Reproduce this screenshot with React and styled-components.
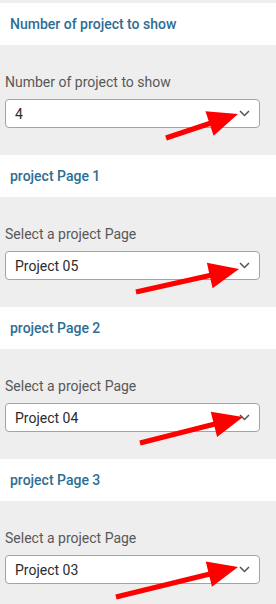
import React from "react";
import styled, { createGlobalStyle } from "styled-components";

const Global = createGlobalStyle`
  html, body {
    margin: 0;
    padding: 0;
    background: #eeeeee;
    font-family: Roboto, "Liberation Sans", sans-serif;
  }
`;

const Page = styled.div`
  width: 276px;
  padding-top: 3px;
  background: #eeeeee;
`;

const Section = styled.section`
  position: relative;
  display: flex;
  flex-direction: column;
`;

const Header = styled.div`
  height: 42px;
  display: flex;
  align-items: center;
  padding-left: 10px;
  background: #ffffff;
  color: #2c6e94;
  font-size: 14px;
  font-weight: 500;
`;

const Body = styled.div`
  display: flex;
  flex-direction: column;
  padding: 27px 16px 27px 5px;
`;

const Label = styled.div`
  line-height: 20px;
  margin-bottom: 7px;
  color: #585858;
  font-size: 14px;
`;

const SelectBox = styled.div`
  height: 29px;
  box-sizing: border-box;
  display: flex;
  align-items: center;
  justify-content: space-between;
  padding: 0 9px 0 9px;
  background: #ffffff;
  border: 1px solid #a3a3a3;
  border-radius: 4px;
  color: #2b2b2b;
  font-size: 14px;
`;

const Overlay = styled.svg`
  position: absolute;
  left: 0;
  top: 0;
  width: 276px;
  height: 152px;
  pointer-events: none;
`;

const Chevron = () => (
  <svg width="11" height="7" viewBox="0 0 11 7">
    <path d="M1 1l4.5 4.5L10 1" fill="none" stroke="#555" strokeWidth="1.5" />
  </svg>
);

const Arrow = ({ from, to }) => {
  const dx = to[0] - from[0];
  const dy = to[1] - from[1];
  const len = Math.hypot(dx, dy);
  const ux = dx / len;
  const uy = dy / len;
  const nx = -uy;
  const ny = ux;
  const w = 2.6;
  const hw = 13;
  const hl = 30;
  const neck = [to[0] - ux * hl, to[1] - uy * hl];
  const pts = [
    [from[0] + nx * w, from[1] + ny * w],
    [neck[0] + nx * w, neck[1] + ny * w],
    [neck[0] + nx * hw, neck[1] + ny * hw],
    to,
    [neck[0] - nx * hw, neck[1] - ny * hw],
    [neck[0] - nx * w, neck[1] - ny * w],
    [from[0] - nx * w, from[1] - ny * w],
  ];
  return (
    <Overlay viewBox="0 0 276 152">
      <polygon points={pts.map((p) => p.join(",")).join(" ")} fill="#ff0000" />
    </Overlay>
  );
};

const sections = [
  {
    title: "Number of project to show",
    label: "Number of project to show",
    value: "4",
    arrow: { from: [166, 135], to: [238, 111] },
  },
  {
    title: "project Page 1",
    label: "Select a project Page",
    value: "Project 05",
    arrow: { from: [136, 137], to: [239, 114] },
  },
  {
    title: "project Page 2",
    label: "Select a project Page",
    value: "Project 04",
    arrow: { from: [140, 136], to: [243, 110] },
  },
  {
    title: "project Page 3",
    label: "Select a project Page",
    value: "Project 03",
    arrow: { from: [116, 138], to: [238, 108] },
  },
];

const App = () => {
  return (
    <>
      <Global />
      <Page>
        {sections.map((s, i) => (
          <Section key={i}>
            <Header>{s.title}</Header>
            <Body>
              <Label>{s.label}</Label>
              <SelectBox>
                <span>{s.value}</span>
                <Chevron />
              </SelectBox>
            </Body>
            <Arrow from={s.arrow.from} to={s.arrow.to} />
          </Section>
        ))}
      </Page>
    </>
  );
};

export default App;
